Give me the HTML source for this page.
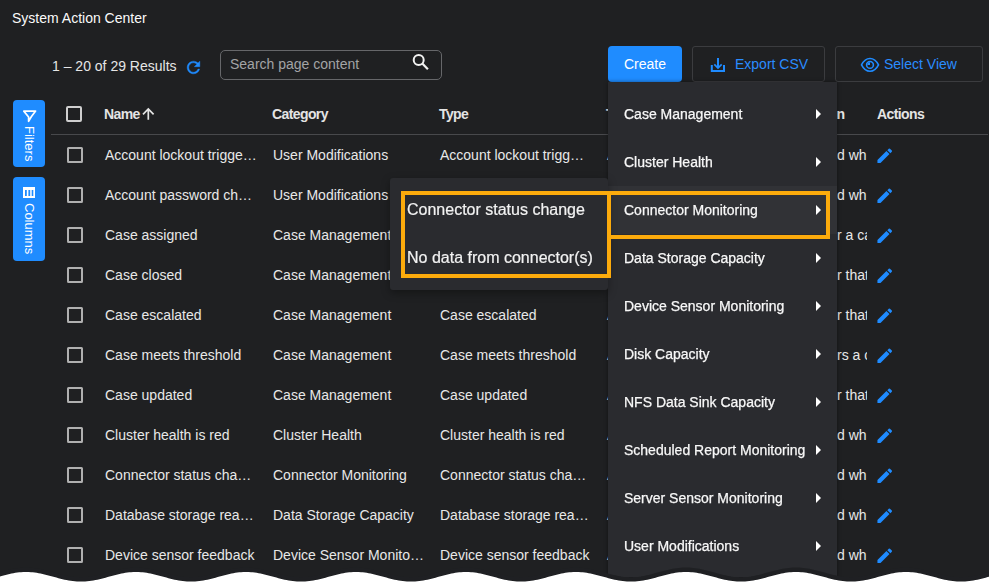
<!DOCTYPE html>
<html><head><meta charset="utf-8">
<style>
*{box-sizing:border-box;margin:0;padding:0}
html,body{width:989px;height:583px;overflow:hidden;background:#1f2022;font-family:"Liberation Sans",sans-serif;color:#e6e6e6}
body{position:relative}
.abs{position:absolute;white-space:nowrap}
.title{left:12px;top:10px;font-size:14px;line-height:16px;color:#fafafa}
.results{left:52px;top:58px;font-size:14px;line-height:16px;color:#e6e6e6}
.search{left:220px;top:50px;width:222px;height:30px;border:1px solid #66676a;border-radius:5px}
.search span{position:absolute;left:9px;top:5px;font-size:14px;line-height:16px;color:#a3a4a6}
.btn{top:46px;height:36px;border-radius:4px;font-size:14px}
.create{left:608px;width:74px;background:#1f8cff;color:#fff;text-align:center;line-height:36px}
.outline{border:1px solid #3b3c3f;color:#2a8cff;border-radius:3px}
.outline span{position:absolute;top:10px;line-height:16px}
.tab{left:13px;width:32px;background:#1f8cff;border-radius:4px}
.vt{position:absolute;font-size:13px;line-height:15px;color:#fff;transform-origin:0 0;transform:rotate(90deg);white-space:nowrap}
.hdr{top:106px;font-size:14px;line-height:16px;font-weight:bold;color:#e4e4e4;letter-spacing:-0.6px}
.hcb{position:absolute;left:66px;top:106px;width:16px;height:16px;border:2px solid #cfcfcf;border-radius:2px}
.row{position:absolute;left:0;width:989px;height:40px;font-size:14px;color:#e8e8e8}
.row>span{position:absolute;top:12px;line-height:16px;white-space:nowrap}
.row .cb{position:absolute;left:67px;top:12px;width:16px;height:16px;border:2px solid #b0b0b0;border-radius:1.5px}
.desc{position:absolute;left:820px;width:47px;top:12px;height:18px;overflow:hidden}
.desc span{position:absolute;right:auto;left:17px;line-height:16px;white-space:nowrap}
.pen{position:absolute;left:874.7px;top:11.4px}
.menu{left:608px;top:82px;width:229px;height:495px;background:#2a2b2f;overflow:hidden;box-shadow:0 0 4px rgba(0,0,0,0.45)}
.mi{position:absolute;left:0;width:229px;height:48px}
.mi span{position:absolute;left:16px;top:16px;font-size:14px;line-height:16px;color:#f8f8f8;white-space:nowrap;will-change:transform;-webkit-text-stroke:0.25px #f8f8f8}
.mi.hov{background:#313236}
.arr{position:absolute;left:208px;top:19px;width:0;height:0;border-left:5px solid #fff;border-top:5px solid transparent;border-bottom:5px solid transparent}
.sub{left:390px;top:178px;width:218px;height:112px;background:#2a2b2f;border-radius:3px;box-shadow:0 3px 8px rgba(0,0,0,0.35)}
.sub span{position:absolute;left:17px;font-size:16px;line-height:18px;color:#f2f2f2;white-space:nowrap;will-change:transform;-webkit-text-stroke:0.2px #f2f2f2}
.hl{position:absolute;border:4px solid #fcab0c}
</style></head><body>
<div class="abs title">System Action Center</div>
<div class="abs results">1 – 20 of 29 Results</div>
<svg class="abs" style="left:183.8px;top:57.5px" width="19" height="19" viewBox="0 0 24 24"><path fill="#1f8bff" stroke="#1f8bff" stroke-width="0.5" d="M17.65 6.35C16.2 4.9 14.21 4 12 4c-4.42 0-7.99 3.58-7.99 8s3.57 8 7.99 8c3.730 0 6.84-2.55 7.73-6h-2.08c-.82 2.33-3.04 4-5.65 4-3.31 0-6-2.690-6-6s2.69-6 6-6c1.66 0 3.14.69 4.22 1.78L13 11h7V4l-2.35 2.35z"/></svg>
<div class="abs search"><span>Search page content</span>
<svg style="position:absolute;left:191px;top:3px" width="18" height="18" viewBox="0 0 18 18"><circle cx="6.7" cy="6" r="5" fill="none" stroke="#f2f2f2" stroke-width="2"/><path d="M10.3 9.6 L15.9 15.3" stroke="#f2f2f2" stroke-width="2.2" stroke-linecap="butt"/></svg>
</div>
<div class="abs btn create">Create</div>
<div class="abs btn outline" style="left:692px;width:133px">
<svg style="position:absolute;left:16px;top:9px" width="18" height="18" viewBox="0 0 18 18"><path d="M9 2 V11.5" stroke="#1f8bff" stroke-width="2" fill="none"/><path d="M5.3 8.3 L9 12 L12.7 8.3" stroke="#1f8bff" stroke-width="1.7" fill="none"/><path d="M2.8 9 V14.9 H15 V9" stroke="#1f8bff" stroke-width="2" fill="none"/></svg>
<span style="left:42px;top:9px">Export CSV</span></div>
<div class="abs btn outline" style="left:835px;width:148px">
<svg style="position:absolute;left:19px;top:5px" width="30" height="26" viewBox="0 0 30 26"><path d="M6.5 12.9 C9 8 12 6.5 15 6.5 C18 6.5 21 8 23.5 12.9 C21 17.8 18 19.3 15 19.3 C12 19.3 9 17.8 6.5 12.9 Z" stroke="#1f8bff" stroke-width="1.6" fill="none"/><circle cx="15" cy="12.9" r="3.4" stroke="#1f8bff" stroke-width="1.6" fill="none"/><path d="M15 12.9 L15 10.3 A2.6 2.6 0 0 0 12.4 12.9 Z" fill="#1f8bff"/></svg>
<span style="left:48px;top:9px">Select View</span></div>

<div class="abs tab" style="top:100px;height:67px">
<svg style="position:absolute;left:9px;top:9px" width="16" height="15" viewBox="0 0 16 15"><path d="M1.8 2.1 H13.6 L9.3 7.8 L6.6 12.3 V8 Z" fill="none" stroke="#fff" stroke-width="1.7" stroke-linejoin="round"/></svg>
<span class="vt" style="left:24px;top:26px">Filters</span></div>
<div class="abs tab" style="top:177px;height:84px">
<svg style="position:absolute;left:10px;top:10px" width="12" height="11" viewBox="0 0 12 11"><rect x="0" y="0" width="12" height="11" fill="#fff"/><rect x="2" y="3" width="1.8" height="6" fill="#1f8cff"/><rect x="5.4" y="3" width="1.8" height="6" fill="#1f8cff"/><rect x="8.7" y="3" width="1.6" height="6" fill="#1f8cff"/></svg>
<span class="vt" style="left:24px;top:26px">Columns</span></div>

<div class="abs" style="left:51px;top:134px;width:937px;height:1px;background:#48494c"></div>
<div class="hcb"></div>
<div class="abs hdr" style="left:104px">Name</div>
<svg class="abs" style="left:141px;top:107px" width="15" height="14" viewBox="0 0 15 14"><path d="M7.3 12.7 V1.6 M2 7.3 L7.3 1.9 L12.6 7.3" stroke="#e4e4e4" stroke-width="1.7" fill="none"/></svg>
<div class="abs hdr" style="left:272px">Category</div>
<div class="abs hdr" style="left:439px">Type</div>
<div class="abs hdr" style="left:606px">Trigger</div>
<div class="abs hdr" style="left:774px">Description</div>
<div class="abs hdr" style="left:877px">Actions</div>

<div class="row" style="top:135px"><div class="cb"></div><span style="left:105px">Account lockout trigge…</span><span style="left:273px">User Modifications</span><span style="left:440px">Account lockout trigg…</span><span style="left:607px">A</span><div class="desc"><span>d wh</span></div><svg class="pen" width="19.5" height="19.5" viewBox="0 0 24 24"><path fill="#1f8bff" d="M3 17.25V21h3.75L17.81 9.94l-3.75-3.75L3 17.25zM20.71 7.04c.39-.39.39-1.02 0-1.41l-2.34-2.34a.9959.9959 0 0 0-1.41 0l-1.83 1.83 3.75 3.75 1.83-1.83z"/></svg></div>
<div class="row" style="top:175px"><div class="cb"></div><span style="left:105px">Account password ch…</span><span style="left:273px">User Modifications</span><span style="left:440px">Account password ch…</span><span style="left:607px">A</span><div class="desc"><span>d wh</span></div><svg class="pen" width="19.5" height="19.5" viewBox="0 0 24 24"><path fill="#1f8bff" d="M3 17.25V21h3.75L17.81 9.94l-3.75-3.75L3 17.25zM20.71 7.04c.39-.39.39-1.02 0-1.41l-2.34-2.34a.9959.9959 0 0 0-1.41 0l-1.83 1.83 3.75 3.75 1.83-1.83z"/></svg></div>
<div class="row" style="top:215px"><div class="cb"></div><span style="left:105px">Case assigned</span><span style="left:273px">Case Management</span><span style="left:440px">Case assigned</span><span style="left:607px">A</span><div class="desc"><span>r a ca</span></div><svg class="pen" width="19.5" height="19.5" viewBox="0 0 24 24"><path fill="#1f8bff" d="M3 17.25V21h3.75L17.81 9.94l-3.75-3.75L3 17.25zM20.71 7.04c.39-.39.39-1.02 0-1.41l-2.34-2.34a.9959.9959 0 0 0-1.41 0l-1.83 1.83 3.75 3.75 1.83-1.83z"/></svg></div>
<div class="row" style="top:255px"><div class="cb"></div><span style="left:105px">Case closed</span><span style="left:273px">Case Management</span><span style="left:440px">Case closed</span><span style="left:607px">A</span><div class="desc"><span>r that</span></div><svg class="pen" width="19.5" height="19.5" viewBox="0 0 24 24"><path fill="#1f8bff" d="M3 17.25V21h3.75L17.81 9.94l-3.75-3.75L3 17.25zM20.71 7.04c.39-.39.39-1.02 0-1.41l-2.34-2.34a.9959.9959 0 0 0-1.41 0l-1.83 1.83 3.75 3.75 1.83-1.83z"/></svg></div>
<div class="row" style="top:295px"><div class="cb"></div><span style="left:105px">Case escalated</span><span style="left:273px">Case Management</span><span style="left:440px">Case escalated</span><span style="left:607px">A</span><div class="desc"><span>r that</span></div><svg class="pen" width="19.5" height="19.5" viewBox="0 0 24 24"><path fill="#1f8bff" d="M3 17.25V21h3.75L17.81 9.94l-3.75-3.75L3 17.25zM20.71 7.04c.39-.39.39-1.02 0-1.41l-2.34-2.34a.9959.9959 0 0 0-1.41 0l-1.83 1.83 3.75 3.75 1.83-1.83z"/></svg></div>
<div class="row" style="top:335px"><div class="cb"></div><span style="left:105px">Case meets threshold</span><span style="left:273px">Case Management</span><span style="left:440px">Case meets threshold</span><span style="left:607px">A</span><div class="desc"><span>rs a c</span></div><svg class="pen" width="19.5" height="19.5" viewBox="0 0 24 24"><path fill="#1f8bff" d="M3 17.25V21h3.75L17.81 9.94l-3.75-3.75L3 17.25zM20.71 7.04c.39-.39.39-1.02 0-1.41l-2.34-2.34a.9959.9959 0 0 0-1.41 0l-1.83 1.83 3.75 3.75 1.83-1.83z"/></svg></div>
<div class="row" style="top:375px"><div class="cb"></div><span style="left:105px">Case updated</span><span style="left:273px">Case Management</span><span style="left:440px">Case updated</span><span style="left:607px">A</span><div class="desc"><span>r that</span></div><svg class="pen" width="19.5" height="19.5" viewBox="0 0 24 24"><path fill="#1f8bff" d="M3 17.25V21h3.75L17.81 9.94l-3.75-3.75L3 17.25zM20.71 7.04c.39-.39.39-1.02 0-1.41l-2.34-2.34a.9959.9959 0 0 0-1.41 0l-1.83 1.83 3.75 3.75 1.83-1.83z"/></svg></div>
<div class="row" style="top:415px"><div class="cb"></div><span style="left:105px">Cluster health is red</span><span style="left:273px">Cluster Health</span><span style="left:440px">Cluster health is red</span><span style="left:607px">A</span><div class="desc"><span>d wh</span></div><svg class="pen" width="19.5" height="19.5" viewBox="0 0 24 24"><path fill="#1f8bff" d="M3 17.25V21h3.75L17.81 9.94l-3.75-3.75L3 17.25zM20.71 7.04c.39-.39.39-1.02 0-1.41l-2.34-2.34a.9959.9959 0 0 0-1.41 0l-1.83 1.83 3.75 3.75 1.83-1.83z"/></svg></div>
<div class="row" style="top:455px"><div class="cb"></div><span style="left:105px">Connector status cha…</span><span style="left:273px">Connector Monitoring</span><span style="left:440px">Connector status cha…</span><span style="left:607px">A</span><div class="desc"><span>d wh</span></div><svg class="pen" width="19.5" height="19.5" viewBox="0 0 24 24"><path fill="#1f8bff" d="M3 17.25V21h3.75L17.81 9.94l-3.75-3.75L3 17.25zM20.71 7.04c.39-.39.39-1.02 0-1.41l-2.34-2.34a.9959.9959 0 0 0-1.41 0l-1.83 1.83 3.75 3.75 1.83-1.83z"/></svg></div>
<div class="row" style="top:495px"><div class="cb"></div><span style="left:105px">Database storage rea…</span><span style="left:273px">Data Storage Capacity</span><span style="left:440px">Database storage rea…</span><span style="left:607px">A</span><div class="desc"><span>d wh</span></div><svg class="pen" width="19.5" height="19.5" viewBox="0 0 24 24"><path fill="#1f8bff" d="M3 17.25V21h3.75L17.81 9.94l-3.75-3.75L3 17.25zM20.71 7.04c.39-.39.39-1.02 0-1.41l-2.34-2.34a.9959.9959 0 0 0-1.41 0l-1.83 1.83 3.75 3.75 1.83-1.83z"/></svg></div>
<div class="row" style="top:535px"><div class="cb"></div><span style="left:105px">Device sensor feedback</span><span style="left:273px">Device Sensor Monito…</span><span style="left:440px">Device sensor feedback</span><span style="left:607px">A</span><div class="desc"><span>d wh</span></div><svg class="pen" width="19.5" height="19.5" viewBox="0 0 24 24"><path fill="#1f8bff" d="M3 17.25V21h3.75L17.81 9.94l-3.75-3.75L3 17.25zM20.71 7.04c.39-.39.39-1.02 0-1.41l-2.34-2.34a.9959.9959 0 0 0-1.41 0l-1.83 1.83 3.75 3.75 1.83-1.83z"/></svg></div>

<div class="abs menu">
<div class="mi" style="top:8px"><span>Case Management</span><i class="arr"></i></div>
<div class="mi" style="top:56px"><span>Cluster Health</span><i class="arr"></i></div>
<div class="mi hov" style="top:104px"><span>Connector Monitoring</span><i class="arr"></i></div>
<div class="mi" style="top:152px"><span>Data Storage Capacity</span><i class="arr"></i></div>
<div class="mi" style="top:200px"><span>Device Sensor Monitoring</span><i class="arr"></i></div>
<div class="mi" style="top:248px"><span>Disk Capacity</span><i class="arr"></i></div>
<div class="mi" style="top:296px"><span>NFS Data Sink Capacity</span><i class="arr"></i></div>
<div class="mi" style="top:344px"><span>Scheduled Report Monitoring</span><i class="arr"></i></div>
<div class="mi" style="top:392px"><span>Server Sensor Monitoring</span><i class="arr"></i></div>
<div class="mi" style="top:440px"><span>User Modifications</span><i class="arr"></i></div>
</div>
<div class="abs sub"><span style="top:23px">Connector status change</span><span style="top:71px">No data from connector(s)</span></div>
<div class="hl" style="left:401px;top:191px;width:210px;height:87px"></div>
<div class="hl" style="left:607px;top:191px;width:223px;height:48px"></div>

<svg class="abs" style="left:0;top:560px" width="989" height="23" viewBox="0 560 989 23">
<path id="wave" d="M -3 600 L -3 574.96 L -1 574.41 L 1 573.87 L 3 573.33 L 5 572.81 L 7 572.31 L 9 571.84 L 11 571.41 L 13 571.01 L 15 570.67 L 17 570.37 L 19 570.13 L 21 569.94 L 23 569.82 L 25 569.76 L 27 569.76 L 29 569.82 L 31 569.94 L 33 570.13 L 35 570.37 L 37 570.67 L 39 571.01 L 41 571.41 L 43 571.84 L 45 572.31 L 47 572.81 L 49 573.33 L 51 573.87 L 53 574.41 L 55 574.96 L 57 575.50 L 59 576.03 L 61 576.54 L 63 577.03 L 65 577.48 L 67 577.90 L 69 578.27 L 71 578.59 L 73 578.86 L 75 579.07 L 77 579.23 L 79 579.32 L 81 579.35 L 83 579.32 L 85 579.23 L 87 579.07 L 89 578.86 L 91 578.59 L 93 578.27 L 95 577.90 L 97 577.48 L 99 577.03 L 101 576.54 L 103 576.03 L 105 575.50 L 107 574.96 L 109 574.41 L 111 573.87 L 113 573.33 L 115 572.81 L 117 572.31 L 119 571.84 L 121 571.41 L 123 571.01 L 125 570.67 L 127 570.37 L 129 570.13 L 131 569.94 L 133 569.82 L 135 569.76 L 137 569.76 L 139 569.82 L 141 569.94 L 143 570.13 L 145 570.37 L 147 570.67 L 149 571.01 L 151 571.41 L 153 571.84 L 155 572.31 L 157 572.81 L 159 573.33 L 161 573.87 L 163 574.41 L 165 574.96 L 167 575.50 L 169 576.03 L 171 576.54 L 173 577.03 L 175 577.48 L 177 577.90 L 179 578.27 L 181 578.59 L 183 578.86 L 185 579.07 L 187 579.23 L 189 579.32 L 191 579.35 L 193 579.32 L 195 579.23 L 197 579.07 L 199 578.86 L 201 578.59 L 203 578.27 L 205 577.90 L 207 577.48 L 209 577.03 L 211 576.54 L 213 576.03 L 215 575.50 L 217 574.96 L 219 574.41 L 221 573.87 L 223 573.33 L 225 572.81 L 227 572.31 L 229 571.84 L 231 571.41 L 233 571.01 L 235 570.67 L 237 570.37 L 239 570.13 L 241 569.94 L 243 569.82 L 245 569.76 L 247 569.76 L 249 569.82 L 251 569.94 L 253 570.13 L 255 570.37 L 257 570.67 L 259 571.01 L 261 571.41 L 263 571.84 L 265 572.31 L 267 572.81 L 269 573.33 L 271 573.87 L 273 574.41 L 275 574.96 L 277 575.50 L 279 576.03 L 281 576.54 L 283 577.03 L 285 577.48 L 287 577.90 L 289 578.27 L 291 578.59 L 293 578.86 L 295 579.07 L 297 579.23 L 299 579.32 L 301 579.35 L 303 579.32 L 305 579.23 L 307 579.07 L 309 578.86 L 311 578.59 L 313 578.27 L 315 577.90 L 317 577.48 L 319 577.03 L 321 576.54 L 323 576.03 L 325 575.50 L 327 574.96 L 329 574.41 L 331 573.87 L 333 573.33 L 335 572.81 L 337 572.31 L 339 571.84 L 341 571.41 L 343 571.01 L 345 570.67 L 347 570.37 L 349 570.13 L 351 569.94 L 353 569.82 L 355 569.76 L 357 569.76 L 359 569.82 L 361 569.94 L 363 570.13 L 365 570.37 L 367 570.67 L 369 571.01 L 371 571.41 L 373 571.84 L 375 572.31 L 377 572.81 L 379 573.33 L 381 573.87 L 383 574.41 L 385 574.96 L 387 575.50 L 389 576.03 L 391 576.54 L 393 577.03 L 395 577.48 L 397 577.90 L 399 578.27 L 401 578.59 L 403 578.86 L 405 579.07 L 407 579.23 L 409 579.32 L 411 579.35 L 413 579.32 L 415 579.23 L 417 579.07 L 419 578.86 L 421 578.59 L 423 578.27 L 425 577.90 L 427 577.48 L 429 577.03 L 431 576.54 L 433 576.03 L 435 575.50 L 437 574.96 L 439 574.41 L 441 573.87 L 443 573.33 L 445 572.81 L 447 572.31 L 449 571.84 L 451 571.41 L 453 571.01 L 455 570.67 L 457 570.37 L 459 570.13 L 461 569.94 L 463 569.82 L 465 569.76 L 467 569.76 L 469 569.82 L 471 569.94 L 473 570.13 L 475 570.37 L 477 570.67 L 479 571.01 L 481 571.41 L 483 571.84 L 485 572.31 L 487 572.81 L 489 573.33 L 491 573.87 L 493 574.41 L 495 574.96 L 497 575.50 L 499 576.03 L 501 576.54 L 503 577.03 L 505 577.48 L 507 577.90 L 509 578.27 L 511 578.59 L 513 578.86 L 515 579.07 L 517 579.23 L 519 579.32 L 521 579.35 L 523 579.32 L 525 579.23 L 527 579.07 L 529 578.86 L 531 578.59 L 533 578.27 L 535 577.90 L 537 577.48 L 539 577.03 L 541 576.54 L 543 576.03 L 545 575.50 L 547 574.96 L 549 574.41 L 551 573.87 L 553 573.33 L 555 572.81 L 557 572.31 L 559 571.84 L 561 571.41 L 563 571.01 L 565 570.67 L 567 570.37 L 569 570.13 L 571 569.94 L 573 569.82 L 575 569.76 L 577 569.76 L 579 569.82 L 581 569.94 L 583 570.13 L 585 570.37 L 587 570.67 L 589 571.01 L 591 571.41 L 593 571.84 L 595 572.31 L 597 572.81 L 599 573.33 L 601 573.87 L 603 574.41 L 605 574.96 L 607 575.50 L 609 576.03 L 611 576.54 L 613 577.03 L 615 577.48 L 617 577.90 L 619 578.27 L 621 578.59 L 623 578.86 L 625 579.07 L 627 579.23 L 629 579.32 L 631 579.35 L 633 579.32 L 635 579.23 L 637 579.07 L 639 578.86 L 641 578.59 L 643 578.27 L 645 577.90 L 647 577.48 L 649 577.03 L 651 576.54 L 653 576.03 L 655 575.50 L 657 574.96 L 659 574.41 L 661 573.87 L 663 573.33 L 665 572.81 L 667 572.31 L 669 571.84 L 671 571.41 L 673 571.01 L 675 570.67 L 677 570.37 L 679 570.13 L 681 569.94 L 683 569.82 L 685 569.76 L 687 569.76 L 689 569.82 L 691 569.94 L 693 570.13 L 695 570.37 L 697 570.67 L 699 571.01 L 701 571.41 L 703 571.84 L 705 572.31 L 707 572.81 L 709 573.33 L 711 573.87 L 713 574.41 L 715 574.96 L 717 575.50 L 719 576.03 L 721 576.54 L 723 577.03 L 725 577.48 L 727 577.90 L 729 578.27 L 731 578.59 L 733 578.86 L 735 579.07 L 737 579.23 L 739 579.32 L 741 579.35 L 743 579.32 L 745 579.23 L 747 579.07 L 749 578.86 L 751 578.59 L 753 578.27 L 755 577.90 L 757 577.48 L 759 577.03 L 761 576.54 L 763 576.03 L 765 575.50 L 767 574.96 L 769 574.41 L 771 573.87 L 773 573.33 L 775 572.81 L 777 572.31 L 779 571.84 L 781 571.41 L 783 571.01 L 785 570.67 L 787 570.37 L 789 570.13 L 791 569.94 L 793 569.82 L 795 569.76 L 797 569.76 L 799 569.82 L 801 569.94 L 803 570.13 L 805 570.37 L 807 570.67 L 809 571.01 L 811 571.41 L 813 571.84 L 815 572.31 L 817 572.81 L 819 573.33 L 821 573.87 L 823 574.41 L 825 574.96 L 827 575.50 L 829 576.03 L 831 576.54 L 833 577.03 L 835 577.48 L 837 577.90 L 839 578.27 L 841 578.59 L 843 578.86 L 845 579.07 L 847 579.23 L 849 579.32 L 851 579.35 L 853 579.32 L 855 579.23 L 857 579.07 L 859 578.86 L 861 578.59 L 863 578.27 L 865 577.90 L 867 577.48 L 869 577.03 L 871 576.54 L 873 576.03 L 875 575.50 L 877 574.96 L 879 574.41 L 881 573.87 L 883 573.33 L 885 572.81 L 887 572.31 L 889 571.84 L 891 571.41 L 893 571.01 L 895 570.67 L 897 570.37 L 899 570.13 L 901 569.94 L 903 569.82 L 905 569.76 L 907 569.76 L 909 569.82 L 911 569.94 L 913 570.13 L 915 570.37 L 917 570.67 L 919 571.01 L 921 571.41 L 923 571.84 L 925 572.31 L 927 572.81 L 929 573.33 L 931 573.87 L 933 574.41 L 935 574.96 L 937 575.50 L 939 576.03 L 941 576.54 L 943 577.03 L 945 577.48 L 947 577.90 L 949 578.27 L 951 578.59 L 953 578.86 L 955 579.07 L 957 579.23 L 959 579.32 L 961 579.35 L 963 579.32 L 965 579.23 L 967 579.07 L 969 578.86 L 971 578.59 L 973 578.27 L 975 577.90 L 977 577.48 L 979 577.03 L 981 576.54 L 983 576.03 L 985 575.50 L 987 574.96 L 989 574.41 L 991 573.87 L 993 600 Z" fill="#fff" stroke="#1f2023" stroke-width="4.4"/>
</svg>
</body></html>
